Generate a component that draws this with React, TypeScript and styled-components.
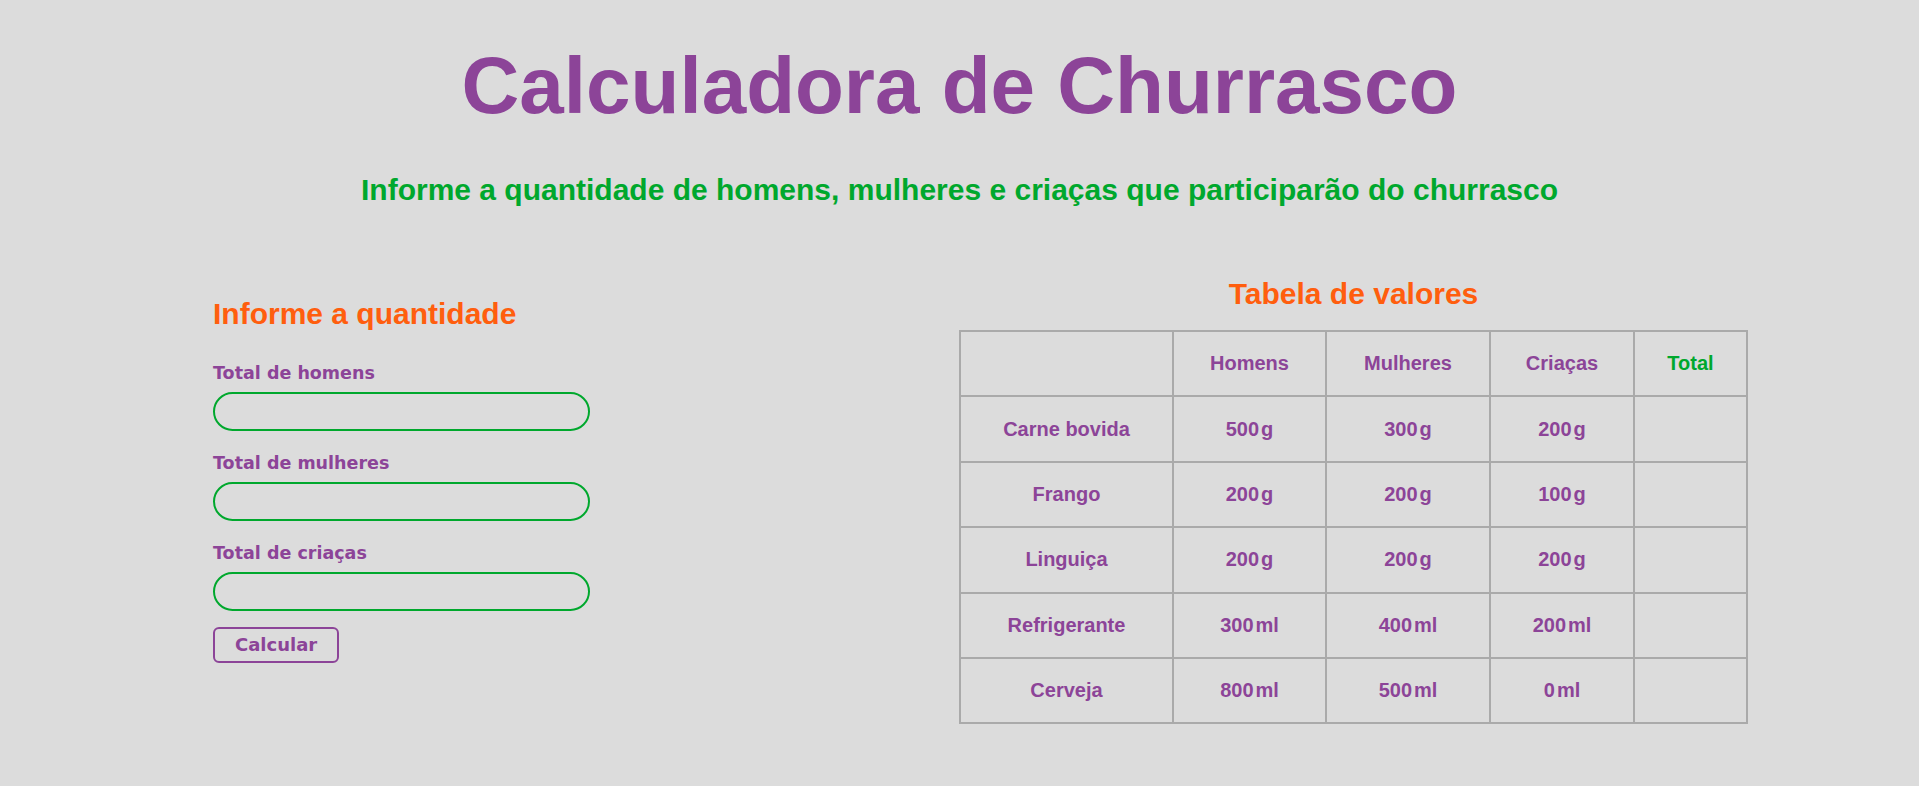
import React from "react";
import styled, { createGlobalStyle } from "styled-components";

const PURPLE = "#8c4498";
const GREEN = "#00a82d";
const ORANGE = "#ff5e0e";
const BG = "#dcdcdc";
const LINE = "#aaaaaa";

const GlobalStyle = createGlobalStyle`
  html, body {
    margin: 0;
    padding: 0;
    background: ${BG};
  }
  body {
    font-family: "Liberation Sans", Arial, sans-serif;
  }
`;

const Page = styled.main`
  padding-top: 40px;
  min-height: 786px;
  box-sizing: border-box;
`;

const Title = styled.h1`
  margin: 0;
  text-align: center;
  font-size: 80px;
  line-height: 92px;
  font-weight: bold;
  color: ${PURPLE};
`;

const Subtitle = styled.h2`
  margin: 41px 0 0;
  text-align: center;
  font-size: 30px;
  line-height: 34px;
  font-weight: bold;
  color: ${GREEN};
`;

const Columns = styled.div`
  display: flex;
  justify-content: space-between;
  align-items: flex-start;
  margin-top: 68px;
  padding: 0 171px 0 213px;
`;

const FormColumn = styled.form`
  display: flex;
  flex-direction: column;
  align-items: flex-start;
  margin-top: 22px;
  width: 377px;
`;

const SectionTitle = styled.h3`
  margin: 0;
  font-size: 30px;
  line-height: 34px;
  font-weight: bold;
  color: ${ORANGE};
`;

const Label = styled.label<{ $first?: boolean }>`
  display: block;
  margin-top: ${(p) => (p.$first ? "32px" : "22px")};
  font-family: "DejaVu Sans", Verdana, sans-serif;
  font-weight: bold;
  font-size: 17.5px;
  line-height: 20px;
  color: ${PURPLE};
`;

const Input = styled.input`
  box-sizing: border-box;
  display: block;
  width: 377px;
  height: 39px;
  margin-top: 9px;
  padding: 0 16px;
  border: 2px solid ${GREEN};
  border-radius: 20px;
  background: transparent;
  outline: none;
  font-family: "Liberation Sans", Arial, sans-serif;
  font-size: 16px;
`;

const Button = styled.button`
  margin-top: 16px;
  box-sizing: border-box;
  height: 36px;
  padding: 0 20px;
  border: 2px solid ${PURPLE};
  border-radius: 6px;
  background: transparent;
  color: ${PURPLE};
  font-family: "DejaVu Sans", Verdana, sans-serif;
  font-weight: bold;
  font-size: 18px;
  line-height: 20px;
  cursor: pointer;
`;

const TableColumn = styled.section`
  display: flex;
  flex-direction: column;
  align-items: center;
`;

const TableTitle = styled.h3`
  margin: 2px 0 19px;
  font-size: 30px;
  line-height: 34px;
  font-weight: bold;
  color: ${ORANGE};
`;

const Table = styled.table`
  width: 787px;
  table-layout: fixed;
  border-collapse: collapse;
  border: 2px solid ${LINE};
`;

const Row = styled.tr`
  height: 65.4px;
`;

const Cell = styled.td<{ $accent?: boolean }>`
  border: 2px solid ${LINE};
  padding: 0;
  text-align: center;
  vertical-align: middle;
  font-size: 20px;
  font-weight: bold;
  color: ${(p) => (p.$accent ? GREEN : PURPLE)};
`;

const HeadCell = styled(Cell).attrs({ as: "th" })``;

const Unit = styled.span`
  margin-left: 2px;
`;

const COLS = [213, 153, 164, 144, 113];

const ROWS: [string, [string, string][]][] = [
  ["Carne bovida", [["500", "g"], ["300", "g"], ["200", "g"]]],
  ["Frango", [["200", "g"], ["200", "g"], ["100", "g"]]],
  ["Linguiça", [["200", "g"], ["200", "g"], ["200", "g"]]],
  ["Refrigerante", [["300", "ml"], ["400", "ml"], ["200", "ml"]]],
  ["Cerveja", [["800", "ml"], ["500", "ml"], ["0", "ml"]]],
];

export default function App() {
  return (
    <>
      <GlobalStyle />
      <Page>
        <Title>Calculadora de Churrasco</Title>
        <Subtitle>
          Informe a quantidade de homens, mulheres e criaças que participarão do churrasco
        </Subtitle>
        <Columns>
          <FormColumn onSubmit={(e) => e.preventDefault()}>
            <SectionTitle>Informe a quantidade</SectionTitle>
            <Label $first htmlFor="homens">Total de homens</Label>
            <Input id="homens" type="number" />
            <Label htmlFor="mulheres">Total de mulheres</Label>
            <Input id="mulheres" type="number" />
            <Label htmlFor="criancas">Total de criaças</Label>
            <Input id="criancas" type="number" />
            <Button type="submit">Calcular</Button>
          </FormColumn>
          <TableColumn>
            <TableTitle>Tabela de valores</TableTitle>
            <Table>
              <colgroup>
                {COLS.map((w, i) => (
                  <col key={i} style={{ width: w }} />
                ))}
              </colgroup>
              <thead>
                <Row>
                  <HeadCell />
                  <HeadCell>Homens</HeadCell>
                  <HeadCell>Mulheres</HeadCell>
                  <HeadCell>Criaças</HeadCell>
                  <HeadCell $accent>Total</HeadCell>
                </Row>
              </thead>
              <tbody>
                {ROWS.map(([name, vals]) => (
                  <Row key={name}>
                    <Cell>{name}</Cell>
                    {vals.map(([n, u], i) => (
                      <Cell key={i}>
                        {n}
                        <Unit>{u}</Unit>
                      </Cell>
                    ))}
                    <Cell />
                  </Row>
                ))}
              </tbody>
            </Table>
          </TableColumn>
        </Columns>
      </Page>
    </>
  );
}
